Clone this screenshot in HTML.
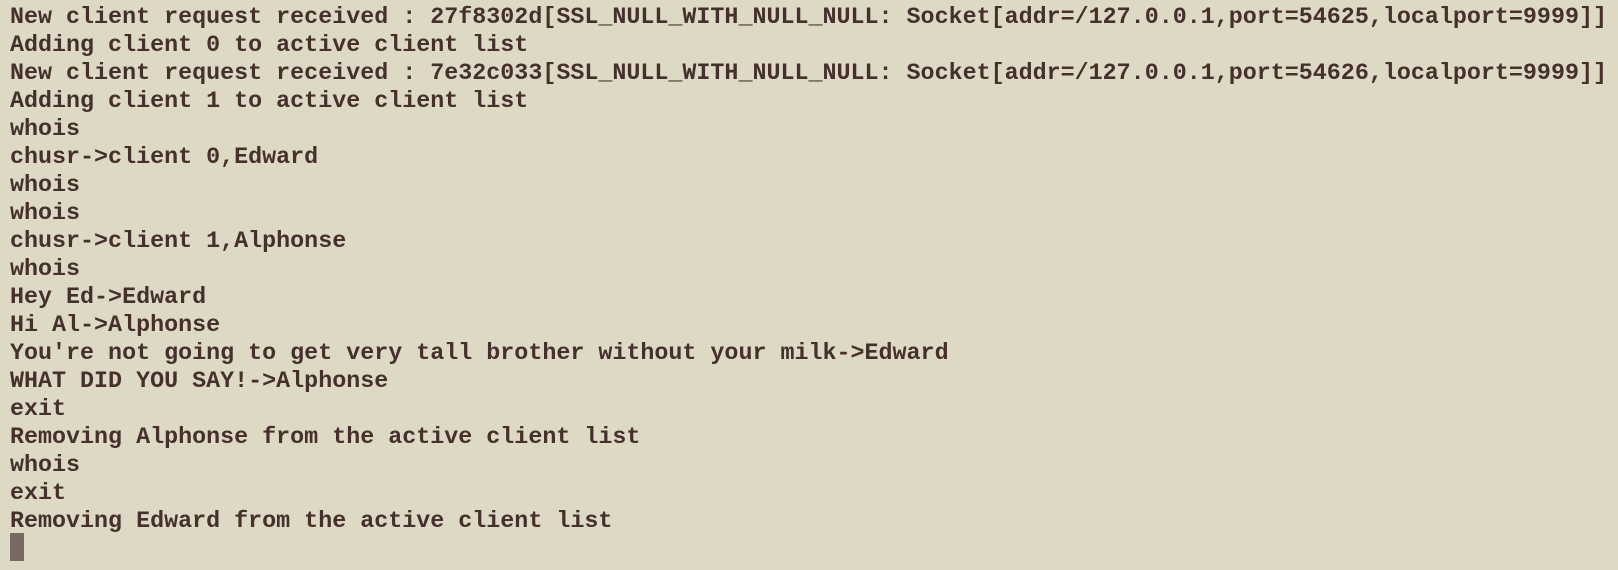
<!DOCTYPE html>
<html><head><style>
html,body{margin:0;padding:0;background:#ddd9c5;width:1618px;height:570px;overflow:hidden}
pre{margin:0;position:absolute;left:10px;top:3.5px;font-family:"Liberation Mono","Courier New",monospace;font-size:23.35px;line-height:28px;color:#45302c;font-weight:bold}
.cur{position:absolute;left:10px;top:533px;width:14px;height:28px;background:#766a62}
</style></head><body>
<pre>New client request received : 27f8302d[SSL_NULL_WITH_NULL_NULL: Socket[addr=/127.0.0.1,port=54625,localport=9999]]
Adding client 0 to active client list
New client request received : 7e32c033[SSL_NULL_WITH_NULL_NULL: Socket[addr=/127.0.0.1,port=54626,localport=9999]]
Adding client 1 to active client list
whois
chusr-&gt;client 0,Edward
whois
whois
chusr-&gt;client 1,Alphonse
whois
Hey Ed-&gt;Edward
Hi Al-&gt;Alphonse
You're not going to get very tall brother without your milk-&gt;Edward
WHAT DID YOU SAY!-&gt;Alphonse
exit
Removing Alphonse from the active client list
whois
exit
Removing Edward from the active client list</pre>
<div class="cur"></div>
</body></html>
